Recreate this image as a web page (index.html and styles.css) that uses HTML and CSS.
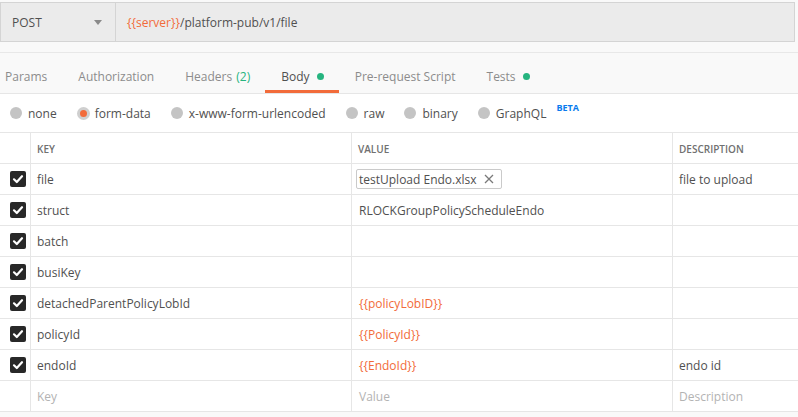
FILE: index.html
```html
<!DOCTYPE html>
<html lang="en">
<head>
	<meta charset="UTF-8">
	<title>POST file</title>
	<link rel="stylesheet" href="styles.css">
</head>
<body>
	<div class="req-bar">
		<div class="method">POST <span class="caret"></span></div>
		<div class="url"><span class="var">{{server}}</span>/platform-pub/v1/file</div>
	</div>

	<div class="tabs">
		<ul class="tab-list">
			<li class="tab">Params</li>
			<li class="tab">Authorization</li>
			<li class="tab">Headers <span class="count">(2)</span></li>
			<li class="tab active">Body <span class="dot"></span></li>
			<li class="tab">Pre-request Script</li>
			<li class="tab">Tests <span class="dot"></span></li>
		</ul>
	</div>

	<div class="body-types">
		<label class="opt"><span class="radio"></span>none</label>
		<label class="opt"><span class="radio on"></span>form-data</label>
		<label class="opt"><span class="radio"></span>x-www-form-urlencoded</label>
		<label class="opt"><span class="radio"></span>raw</label>
		<label class="opt"><span class="radio"></span>binary</label>
		<label class="opt"><span class="radio"></span>GraphQL<sup class="beta">BETA</sup></label>
	</div>

	<div class="kv">
		<div class="row head">
			<div class="cell chk"></div>
			<div class="cell">KEY</div>
			<div class="cell">VALUE</div>
			<div class="cell">DESCRIPTION</div>
		</div>
		<div class="row">
			<div class="cell chk"><span class="box"><svg width="16" height="16" viewBox="0 0 16 16"><polyline points="4,8.3 6.8,11 12,5.2" fill="none" stroke="#fff" stroke-width="2.2" stroke-linecap="round" stroke-linejoin="round"/></svg></span></div>
			<div class="cell">file</div>
			<div class="cell val"><span class="chip">testUpload Endo.xlsx <svg class="x" width="10" height="10" viewBox="0 0 10 10"><path d="M1 1L9 9M9 1L1 9" stroke="#7a7a7a" stroke-width="1.3"/></svg></span></div>
			<div class="cell">file to upload</div>
		</div>
		<div class="row">
			<div class="cell chk"><span class="box"><svg width="16" height="16" viewBox="0 0 16 16"><polyline points="4,8.3 6.8,11 12,5.2" fill="none" stroke="#fff" stroke-width="2.2" stroke-linecap="round" stroke-linejoin="round"/></svg></span></div>
			<div class="cell">struct</div>
			<div class="cell val">RLOCKGroupPolicyScheduleEndo</div>
			<div class="cell"></div>
		</div>
		<div class="row">
			<div class="cell chk"><span class="box"><svg width="16" height="16" viewBox="0 0 16 16"><polyline points="4,8.3 6.8,11 12,5.2" fill="none" stroke="#fff" stroke-width="2.2" stroke-linecap="round" stroke-linejoin="round"/></svg></span></div>
			<div class="cell">batch</div>
			<div class="cell val"></div>
			<div class="cell"></div>
		</div>
		<div class="row">
			<div class="cell chk"><span class="box"><svg width="16" height="16" viewBox="0 0 16 16"><polyline points="4,8.3 6.8,11 12,5.2" fill="none" stroke="#fff" stroke-width="2.2" stroke-linecap="round" stroke-linejoin="round"/></svg></span></div>
			<div class="cell">busiKey</div>
			<div class="cell val"></div>
			<div class="cell"></div>
		</div>
		<div class="row">
			<div class="cell chk"><span class="box"><svg width="16" height="16" viewBox="0 0 16 16"><polyline points="4,8.3 6.8,11 12,5.2" fill="none" stroke="#fff" stroke-width="2.2" stroke-linecap="round" stroke-linejoin="round"/></svg></span></div>
			<div class="cell">detachedParentPolicyLobId</div>
			<div class="cell val var">{{policyLobID}}</div>
			<div class="cell"></div>
		</div>
		<div class="row">
			<div class="cell chk"><span class="box"><svg width="16" height="16" viewBox="0 0 16 16"><polyline points="4,8.3 6.8,11 12,5.2" fill="none" stroke="#fff" stroke-width="2.2" stroke-linecap="round" stroke-linejoin="round"/></svg></span></div>
			<div class="cell">policyId</div>
			<div class="cell val var">{{PolicyId}}</div>
			<div class="cell"></div>
		</div>
		<div class="row">
			<div class="cell chk"><span class="box"><svg width="16" height="16" viewBox="0 0 16 16"><polyline points="4,8.3 6.8,11 12,5.2" fill="none" stroke="#fff" stroke-width="2.2" stroke-linecap="round" stroke-linejoin="round"/></svg></span></div>
			<div class="cell">endoId</div>
			<div class="cell val var">{{EndoId}}</div>
			<div class="cell">endo id</div>
		</div>
		<div class="row empty">
			<div class="cell chk"></div>
			<div class="cell">Key</div>
			<div class="cell val">Value</div>
			<div class="cell">Description</div>
		</div>
	</div>
</body>
</html>
```

FILE: styles.css
```css
* {
	margin: 0;
	padding: 0;
	box-sizing: border-box;
}
body {
	background-color: #f9f9f9;
	font-family: "Open Sans", "Liberation Sans", sans-serif;
	font-size: 12px;
	color: #505050;
	overflow: hidden;
}
.var {
	color: #f26b3a;
}

/* request bar */
.req-bar {
	display: flex;
	height: 40px;
	margin: 2px 3px 0 0;
	border: 1px solid #d4d4d4;
	background-color: #ebebeb;
}
.method {
	width: 115px;
	display: flex;
	align-items: center;
	justify-content: space-between;
	padding: 0 13px 0 11px;
	border-right: 1px solid #d4d4d4;
	color: #505050;
}
.caret {
	width: 0;
	height: 0;
	border-left: 4px solid transparent;
	border-right: 4px solid transparent;
	border-top: 5px solid #8a8a8a;
}
.url {
	display: flex;
	align-items: center;
	padding-left: 11px;
}

/* tabs */
.tabs {
	margin-top: 10px;
	border-top: 1px solid #e8e8e8;
	border-bottom: 1px solid #e6e6e6;
	background-color: #f9f9f9;
	overflow: hidden;
}
.tab-list {
	display: flex;
	list-style: none;
	margin-left: -11px;
}
.tab {
	height: 40px;
	padding: 15px 15px 0 16px;
	color: #8c8c8c;
	white-space: nowrap;
	border-bottom: 3px solid transparent;
}
.tab.active {
	color: #505050;
	border-bottom-color: #f26b3a;
}
.count {
	color: #26b47f;
	margin-left: 1px;
}
.dot {
	display: inline-block;
	width: 7px;
	height: 7px;
	margin-left: 4px;
	border-radius: 50%;
	background-color: #26b47f;
	vertical-align: 1px;
}

/* body type radios */
.body-types {
	display: flex;
	align-items: center;
	gap: 20px;
	height: 38px;
	padding-left: 10px;
	background-color: #fff;
}
.opt {
	display: flex;
	align-items: center;
	gap: 6px;
	white-space: nowrap;
}
.radio {
	width: 12px;
	height: 12px;
	border-radius: 50%;
	background-color: #c4c4c4;
}
.radio.on {
	width: 13px;
	height: 13px;
	background-color: #f26b3a;
	border: 3px solid #cfcfcf;
	margin-right: -1px;
}
.beta {
	font-size: 9px;
	font-weight: 700;
	color: #097bed;
	margin-left: 4px;
	position: relative;
	top: -6px;
}

/* key value table */
.kv {
	background-color: #fff;
	border-top: 1px solid #e6e6e6;
}
.row {
	display: grid;
	grid-template-columns: 31px 321px 321px 1fr;
	height: 31px;
	border-bottom: 1px solid #e6e6e6;
}
.cell {
	display: flex;
	align-items: center;
	padding-left: 6px;
	border-right: 1px solid #e6e6e6;
	white-space: nowrap;
	overflow: hidden;
}
.cell:last-child {
	border-right: none;
}
.cell.val {
	padding-left: 7px;
}
.cell.chk {
	padding-left: 10px;
}
.head .cell {
	font-size: 10px;
	font-weight: 600;
	color: #707070;
	padding-top: 1px;
}
.head .cell.val {
	padding-left: 6px;
}
.box {
	display: block;
	width: 16px;
	height: 16px;
	border-radius: 2px;
	background-color: #282828;
}
.box svg {
	display: block;
}
.chip {
	display: flex;
	align-items: center;
	height: 20px;
	margin-left: -3px;
	padding: 0 7px 0 2px;
	border: 1px solid #cacaca;
	border-radius: 2px;
}
.x {
	margin-left: 7px;
}
.empty .cell {
	color: #b3b3b3;
}
```
